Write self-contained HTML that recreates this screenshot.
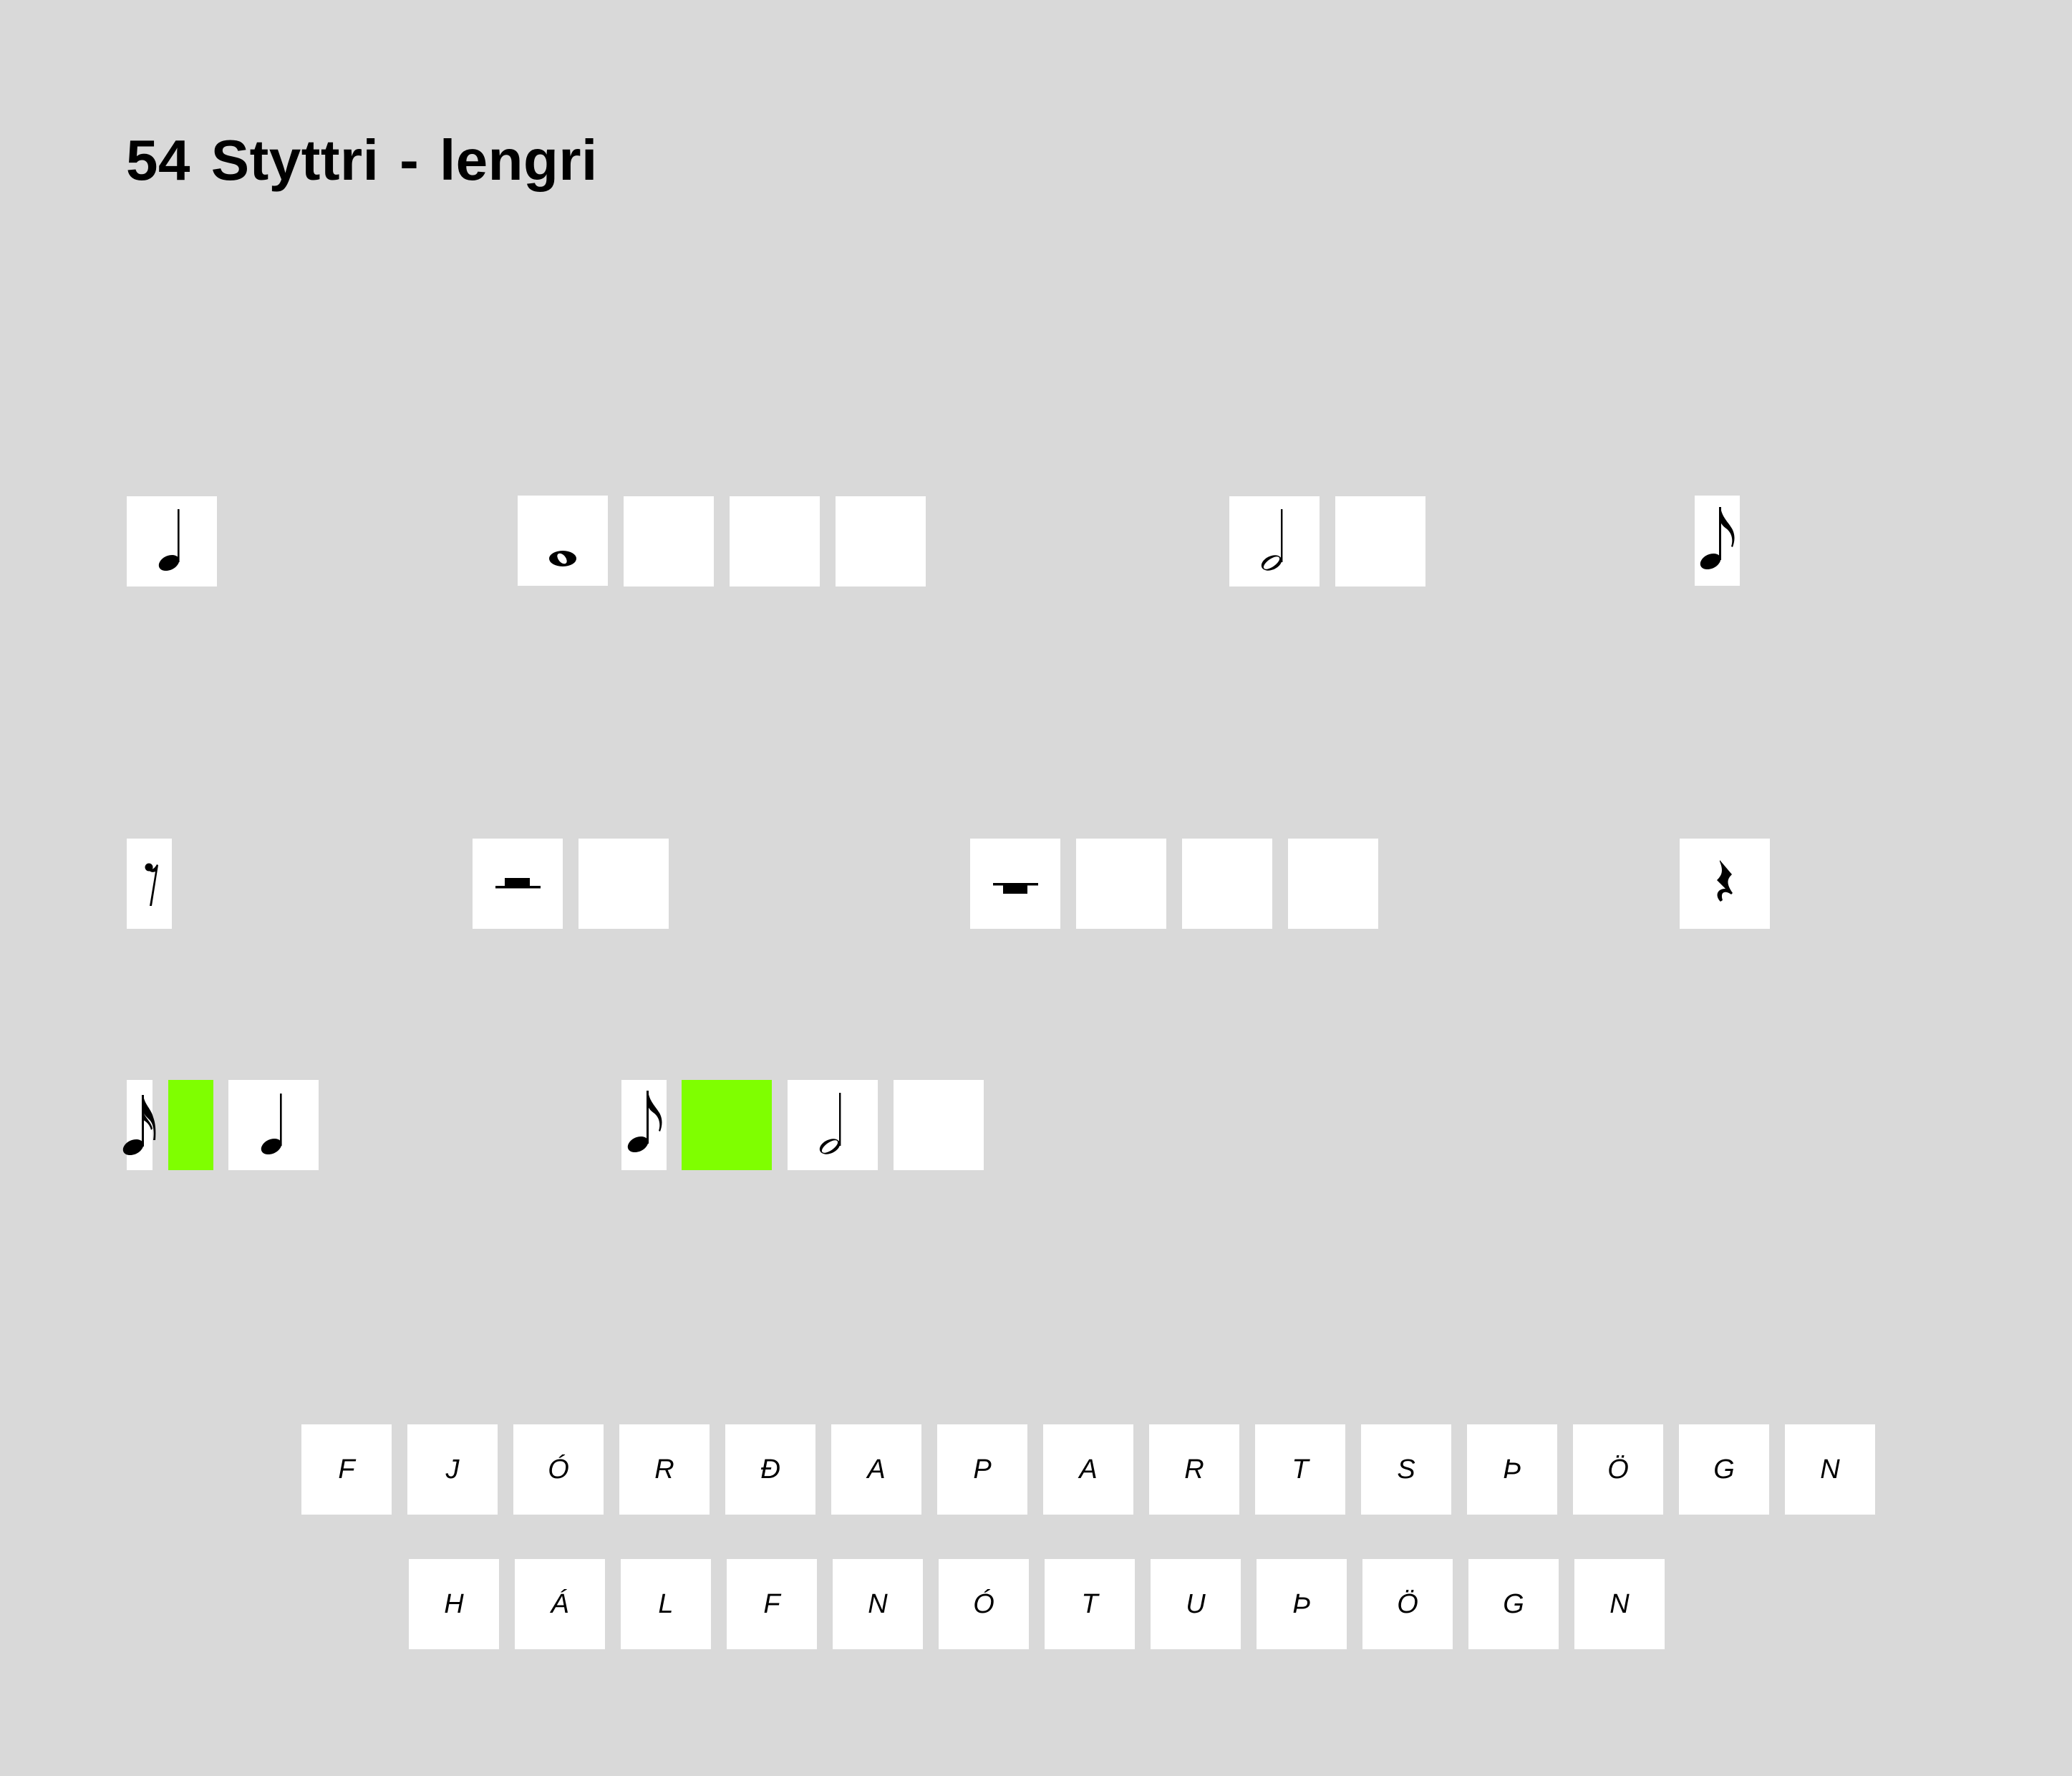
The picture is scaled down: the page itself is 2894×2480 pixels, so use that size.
<!DOCTYPE html>
<html><head><meta charset="utf-8"><style>
html,body{margin:0;padding:0;background:#d9d9d9;}
body{width:2894px;height:2480px;position:relative;overflow:hidden;font-family:"Liberation Sans",sans-serif;}
h1{position:absolute;left:176px;top:184px;margin:0;font-size:80px;font-weight:bold;line-height:1;letter-spacing:0.5px;word-spacing:6px;color:#000;}
.b{position:absolute;background:#fff;width:126px;height:126px;}
.b svg{position:absolute;left:0;top:0;overflow:visible;}
.g{background:#7fff00;}
.n{width:63px;}
.l{font-style:italic;font-size:38px;color:#000;text-align:center;line-height:126px;}
</style></head><body>
<h1>54 Styttri - lengri</h1>

<!-- row 1 -->
<div class="b" style="left:177px;top:693px"><svg width="126" height="126"><ellipse cx="59" cy="93" rx="15" ry="10" transform="rotate(-25 59 93)"/><rect x="71" y="18" width="2.6" height="74"/></svg></div>
<div class="b" style="left:723px;top:692px"><svg width="126" height="126"><ellipse cx="63" cy="88" rx="19" ry="11"/><ellipse cx="62" cy="88" rx="5" ry="8.5" fill="#fff" transform="rotate(-40 62 88)"/></svg></div>
<div class="b" style="left:871px;top:693px"></div>
<div class="b" style="left:1019px;top:693px"></div>
<div class="b" style="left:1167px;top:693px"></div>
<div class="b" style="left:1717px;top:693px"><svg width="126" height="126"><ellipse cx="59" cy="93" rx="15" ry="9.5" transform="rotate(-25 59 93)"/><ellipse cx="59" cy="93" rx="13" ry="5.5" fill="#fff" transform="rotate(-35 59 93)"/><rect x="72" y="18" width="2.4" height="74"/></svg></div>
<div class="b" style="left:1865px;top:693px"></div>
<div class="b n" style="left:2367px;top:692px"><svg width="63" height="126"><ellipse cx="22" cy="92" rx="15" ry="10" transform="rotate(-25 22 92)"/><rect x="34" y="16" width="3" height="74"/><path d="M36 16 C38 30 46 36 52 46 C57 55 56 64 53 72 L51 71 C54 62 52 52 44 46 C40 43 37 40 36 36 Z"/></svg></div>

<!-- row 2 -->
<div class="b n" style="left:177px;top:1171px"><svg width="63" height="126"><circle cx="31" cy="40" r="5.5"/><path d="M28 38 C31 46 38 44 42 36 L44 37 L35 94 L32 94 L40 46 C36 48 30 47 28 38 Z"/></svg></div>
<div class="b" style="left:660px;top:1171px"><svg width="126" height="126"><rect x="45" y="55" width="35" height="12"/><rect x="32" y="66" width="63" height="3.5"/></svg></div>
<div class="b" style="left:808px;top:1171px"></div>
<div class="b" style="left:1355px;top:1171px"><svg width="126" height="126"><rect x="32" y="62" width="63" height="3.5"/><rect x="46" y="65" width="34" height="12"/></svg></div>
<div class="b" style="left:1503px;top:1171px"></div>
<div class="b" style="left:1651px;top:1171px"></div>
<div class="b" style="left:1799px;top:1171px"></div>
<div class="b" style="left:2346px;top:1171px"><svg width="126" height="126"><path d="M56 30 L73 50 C67 56 64 62 74 76 L72 78 C64 72 56 74 60 86 L57 88 C49 80 52 70 64 70 L52 58 C58 52 62 46 56 32 Z"/></svg></div>

<!-- row 3 -->
<div class="b" style="left:177px;top:1508px;width:36px"><svg width="36" height="126"><ellipse cx="9" cy="94" rx="15" ry="10" transform="rotate(-25 9 94)"/><rect x="21" y="21" width="3" height="72"/><path d="M23 21 C25 35 34 40 37 52 C40 60 41 70 40 84 L37 84 C39 72 37 60 31 55 C27 51 24 48 23 44 Z M23 44 C26 54 34 58 36 68 L34 70 C32 62 27 58 23 56 Z"/></svg></div>
<div class="b g" style="left:235px;top:1508px;width:63px"></div>
<div class="b" style="left:319px;top:1508px"><svg width="126" height="126"><ellipse cx="60" cy="93" rx="15" ry="10" transform="rotate(-25 60 93)"/><rect x="72" y="19" width="2.6" height="73"/></svg></div>
<div class="b n" style="left:868px;top:1508px"><svg width="63" height="126"><ellipse cx="23" cy="90" rx="15" ry="10" transform="rotate(-25 23 90)"/><rect x="35" y="15" width="3" height="74"/><path d="M37 15 C39 30 47 36 53 46 C58 55 57 64 54 72 L52 71 C55 62 53 52 45 46 C41 43 38 40 37 36 Z"/></svg></div>
<div class="b g" style="left:952px;top:1508px"></div>
<div class="b" style="left:1100px;top:1508px"><svg width="126" height="126"><ellipse cx="59" cy="93" rx="15" ry="9.5" transform="rotate(-25 59 93)"/><ellipse cx="59" cy="93" rx="13" ry="5.5" fill="#fff" transform="rotate(-35 59 93)"/><rect x="72" y="18" width="2.4" height="74"/></svg></div>
<div class="b" style="left:1248px;top:1508px"></div>

<!-- letters -->
<div class="b l" style="left:421px;top:1989px">F</div>
<div class="b l" style="left:569px;top:1989px">J</div>
<div class="b l" style="left:717px;top:1989px">Ó</div>
<div class="b l" style="left:865px;top:1989px">R</div>
<div class="b l" style="left:1013px;top:1989px">Ð</div>
<div class="b l" style="left:1161px;top:1989px">A</div>
<div class="b l" style="left:1309px;top:1989px">P</div>
<div class="b l" style="left:1457px;top:1989px">A</div>
<div class="b l" style="left:1605px;top:1989px">R</div>
<div class="b l" style="left:1753px;top:1989px">T</div>
<div class="b l" style="left:1901px;top:1989px">S</div>
<div class="b l" style="left:2049px;top:1989px">Þ</div>
<div class="b l" style="left:2197px;top:1989px">Ö</div>
<div class="b l" style="left:2345px;top:1989px">G</div>
<div class="b l" style="left:2493px;top:1989px">N</div>

<div class="b l" style="left:571px;top:2177px">H</div>
<div class="b l" style="left:719px;top:2177px">Á</div>
<div class="b l" style="left:867px;top:2177px">L</div>
<div class="b l" style="left:1015px;top:2177px">F</div>
<div class="b l" style="left:1163px;top:2177px">N</div>
<div class="b l" style="left:1311px;top:2177px">Ó</div>
<div class="b l" style="left:1459px;top:2177px">T</div>
<div class="b l" style="left:1607px;top:2177px">U</div>
<div class="b l" style="left:1755px;top:2177px">Þ</div>
<div class="b l" style="left:1903px;top:2177px">Ö</div>
<div class="b l" style="left:2051px;top:2177px">G</div>
<div class="b l" style="left:2199px;top:2177px">N</div>
</body></html>
